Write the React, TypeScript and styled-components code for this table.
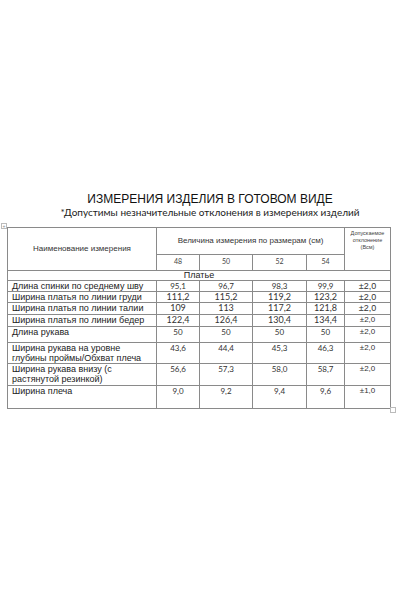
import styled, { createGlobalStyle } from "styled-components";

const GlobalStyle = createGlobalStyle`
  html, body {
    margin: 0;
    padding: 0;
    background: #ffffff;
  }
  body {
    width: 400px;
    height: 600px;
    font-family: "Liberation Sans", Arial, sans-serif;
    color: #1a1a1a;
  }
`;

interface IRow {
  name: string;
  values: string[];
  tol: string;
  height: number;
  big?: boolean;
  bigTol?: boolean;
}

const sizes = ["48", "50", "52", "54"];
const colWidths = [149, 43, 53, 54, 38, 46];

const rows: IRow[] = [
  { name: "Длина спинки по среднему шву", values: ["95,1", "96,7", "98,3", "99,9"], tol: "±2,0", height: 11, bigTol: true },
  { name: "Ширина платья по линии груди", values: ["111,2", "115,2", "119,2", "123,2"], tol: "±2,0", height: 11, big: true, bigTol: true },
  { name: "Ширина платья по линии талии", values: ["109", "113", "117,2", "121,8"], tol: "±2,0", height: 12, big: true, bigTol: true },
  { name: "Ширина платья по линии бедер", values: ["122,4", "126,4", "130,4", "134,4"], tol: "±2,0", height: 12, big: true },
  { name: "Длина рукава", values: ["50", "50", "50", "50"], tol: "±2,0", height: 16 },
  { name: "Ширина рукава на уровне глубины проймы/Обхват плеча", values: ["43,6", "44,4", "45,3", "46,3"], tol: "±2,0", height: 21 },
  { name: "Ширина рукава внизу (с растянутой резинкой)", values: ["56,6", "57,3", "58,0", "58,7"], tol: "±2,0", height: 22 },
  { name: "Ширина плеча", values: ["9,0", "9,2", "9,4", "9,6"], tol: "±1,0", height: 23 },
];

const App = () => {
  return (
    <>
      <GlobalStyle />
      <Page>
        <Heading>
          <Title>ИЗМЕРЕНИЯ ИЗДЕЛИЯ В ГОТОВОМ ВИДЕ</Title>
          <Note>*Допустимы незначительные отклонения в измерениях изделий</Note>
        </Heading>
        <TableWrap>
          <Handle>+</Handle>
          <Grid>
            <colgroup>
              {colWidths.map((w, i) => (
                <Col key={i} $w={w} />
              ))}
            </colgroup>
            <tbody>
              <Row $h={27}>
                <HeadCell rowSpan={2}>Наименование измерения</HeadCell>
                <HeadCell colSpan={4}>Величина измерения по размерам (см)</HeadCell>
                <TolHead rowSpan={2}>
                  Допускаемое
                  <br />
                  отклонение
                  <br />
                  (Всм)
                </TolHead>
              </Row>
              <Row $h={16}>
                {sizes.map((s) => (
                  <SizeCell key={s}>{s}</SizeCell>
                ))}
              </Row>
              <Row $h={10}>
                <GroupCell colSpan={6}>Платье</GroupCell>
              </Row>
              {rows.map((r) => (
                <Row key={r.name} $h={r.height}>
                  <NameCell>{r.name}</NameCell>
                  {r.values.map((v, i) => (
                    <ValueCell key={i} $big={r.big}>
                      {v}
                    </ValueCell>
                  ))}
                  <TolCell $big={r.bigTol}>{r.tol}</TolCell>
                </Row>
              ))}
            </tbody>
          </Grid>
          <Corner />
        </TableWrap>
      </Page>
    </>
  );
};

export default App;

const Page = styled.div`
  display: flex;
  flex-direction: column;
  padding-top: 192px;
`;

const Heading = styled.div`
  display: flex;
  flex-direction: column;
  align-items: center;
  padding-left: 20px;
  margin-bottom: 9px;
`;

const Title = styled.div`
  font-family: "Liberation Sans", Arial, sans-serif;
  font-size: 12px;
  line-height: 14px;
  color: #111;
`;

const Note = styled.div`
  font-family: Lato, "Liberation Sans", sans-serif;
  font-size: 10px;
  line-height: 12px;
  color: #1a1a1a;
`;

const TableWrap = styled.div`
  position: relative;
  margin-left: 7px;
  width: 383px;
`;

const Handle = styled.span`
  position: absolute;
  left: -6px;
  top: -4px;
  width: 4px;
  height: 4px;
  border: 1px solid #bbb;
  font-size: 5px;
  line-height: 4px;
  text-align: center;
  color: #888;
`;

const Corner = styled.span`
  position: absolute;
  right: -6px;
  bottom: -4px;
  width: 4px;
  height: 4px;
  border: 1px solid #bbb;
`;

const Grid = styled.table`
  width: 383px;
  table-layout: fixed;
  border-collapse: collapse;
  border: 1px solid #8a8a8a;

  td {
    border: 1px solid #8a8a8a;
    padding: 0;
    overflow: hidden;
  }
`;

const Col = styled.col<{ $w: number }>`
  width: ${(p) => p.$w}px;
`;

const Row = styled.tr<{ $h: number }>`
  height: ${(p) => p.$h}px;
`;

const HeadCell = styled.td`
  font-family: "Liberation Sans", Arial, sans-serif;
  font-size: 8px;
  line-height: 10px;
  color: #333;
  text-align: center;
  vertical-align: middle;
`;

const TolHead = styled.td`
  font-family: "Liberation Sans", Arial, sans-serif;
  font-size: 5.5px;
  line-height: 7px;
  color: #444;
  text-align: center;
  vertical-align: top;
  && {
    padding-top: 2px;
  }
`;

const SizeCell = styled.td`
  font-family: Lato, "Liberation Sans", sans-serif;
  font-size: 7px;
  line-height: 9px;
  color: #444;
  text-align: center;
  vertical-align: top;
  && {
    padding-top: 2px;
  }
`;

const GroupCell = styled.td`
  font-family: "Liberation Sans", Arial, sans-serif;
  font-size: 9px;
  line-height: 9px;
  color: #222;
  text-align: center;
`;

const NameCell = styled.td`
  font-family: "Liberation Sans", Arial, sans-serif;
  font-size: 9px;
  line-height: 10px;
  color: #222;
  vertical-align: top;
  && {
    padding-left: 4px;
  }
`;

const ValueCell = styled.td<{ $big?: boolean }>`
  font-family: Lato, "Liberation Sans", sans-serif;
  font-size: ${(p) => (p.$big ? "9px" : "8px")};
  line-height: 10px;
  color: #333;
  text-align: center;
  vertical-align: top;
`;

const TolCell = styled.td<{ $big?: boolean }>`
  font-family: "Liberation Sans", Arial, sans-serif;
  font-size: ${(p) => (p.$big ? "9px" : "8px")};
  line-height: 10px;
  color: #333;
  text-align: center;
  vertical-align: top;
`;
